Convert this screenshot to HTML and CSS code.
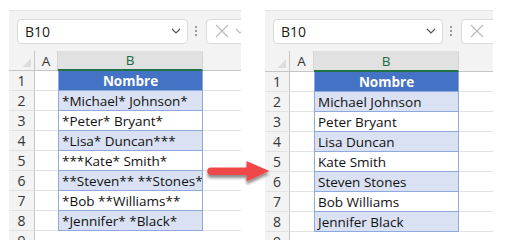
FILE: index.html
```html
<!doctype html>
<html>
<head>
<meta charset="utf-8">
<title>Quitar asteriscos</title>
<link rel="stylesheet" href="styles.css">
</head>
<body>
<div class="stage">
  <div class="panel left">
    <div class="toolbar">
      <div class="namebox"><span>B10</span><svg class="chev" width="10" height="6" viewBox="0 0 10 6"><path d="M1 1l4 4 4-4" fill="none" stroke="#555" stroke-width="1.2"/></svg></div>
      <div class="dots"><i></i><i></i><i></i></div>
      <div class="fxbox"><svg width="14" height="14" viewBox="0 0 14 14"><path d="M1 1l12 12M13 1L1 13" stroke="#bbb" stroke-width="1.2"/></svg><svg class="chev2" width="10" height="6" viewBox="0 0 10 6"><path d="M1 1l4 4 4-4" fill="none" stroke="#bbb" stroke-width="1.2"/></svg></div>
    </div>
    <div class="sheet">
      <div class="corner"></div><div class="colhdr">A</div><div class="colhdr sel">B</div><div class="colhdr last"></div>
      <div class="rowhdr">1</div><div class="cell"></div><div class="tcell head">Nombre</div><div class="cell"></div>
      <div class="rowhdr">2</div><div class="cell"></div><div class="tcell band">*Michael* Johnson*</div><div class="cell"></div>
      <div class="rowhdr">3</div><div class="cell"></div><div class="tcell">*Peter* Bryant*</div><div class="cell"></div>
      <div class="rowhdr">4</div><div class="cell"></div><div class="tcell band">*Lisa* Duncan***</div><div class="cell"></div>
      <div class="rowhdr">5</div><div class="cell"></div><div class="tcell">***Kate* Smith*</div><div class="cell"></div>
      <div class="rowhdr">6</div><div class="cell"></div><div class="tcell band">**Steven** **Stones*</div><div class="cell"></div>
      <div class="rowhdr">7</div><div class="cell"></div><div class="tcell">*Bob **Williams**</div><div class="cell"></div>
      <div class="rowhdr">8</div><div class="cell"></div><div class="tcell band">*Jennifer* *Black*</div><div class="cell"></div>
      <div class="rowhdr">9</div><div class="cell"></div><div class="cell"></div><div class="cell"></div>
    </div>
  </div>

  <div class="panel right">
    <div class="toolbar">
      <div class="namebox"><span>B10</span><svg class="chev" width="10" height="6" viewBox="0 0 10 6"><path d="M1 1l4 4 4-4" fill="none" stroke="#555" stroke-width="1.2"/></svg></div>
      <div class="dots"><i></i><i></i><i></i></div>
      <div class="fxbox"><svg width="14" height="14" viewBox="0 0 14 14"><path d="M1 1l12 12M13 1L1 13" stroke="#bbb" stroke-width="1.2"/></svg></div>
    </div>
    <div class="sheet">
      <div class="corner"></div><div class="colhdr">A</div><div class="colhdr sel">B</div><div class="colhdr last"></div>
      <div class="rowhdr">1</div><div class="cell"></div><div class="tcell head">Nombre</div><div class="cell"></div>
      <div class="rowhdr">2</div><div class="cell"></div><div class="tcell band">Michael Johnson</div><div class="cell"></div>
      <div class="rowhdr">3</div><div class="cell"></div><div class="tcell">Peter Bryant</div><div class="cell"></div>
      <div class="rowhdr">4</div><div class="cell"></div><div class="tcell band">Lisa Duncan</div><div class="cell"></div>
      <div class="rowhdr">5</div><div class="cell"></div><div class="tcell">Kate Smith</div><div class="cell"></div>
      <div class="rowhdr">6</div><div class="cell"></div><div class="tcell band">Steven Stones</div><div class="cell"></div>
      <div class="rowhdr">7</div><div class="cell"></div><div class="tcell">Bob Williams</div><div class="cell"></div>
      <div class="rowhdr">8</div><div class="cell"></div><div class="tcell band">Jennifer Black</div><div class="cell"></div>
      <div class="rowhdr">9</div><div class="cell"></div><div class="cell"></div><div class="cell"></div>
    </div>
  </div>

  <svg class="arrow" width="70" height="36" viewBox="0 0 70 36">
    <defs>
      <filter id="sh" x="-20%" y="-30%" width="140%" height="180%">
        <feGaussianBlur in="SourceAlpha" stdDeviation="1.6"/>
        <feOffset dx="0" dy="2.5"/>
        <feComponentTransfer><feFuncA type="linear" slope="0.45"/></feComponentTransfer>
        <feMerge><feMergeNode/><feMergeNode in="SourceGraphic"/></feMerge>
      </filter>
    </defs>
    <path filter="url(#sh)" fill="#f0474a" d="M8 13.5h35.5v-6.5l23 10-23 10.5v-6.5h-35.5a3.7 3.7 0 0 1 0-7.5z"/>
  </svg>
</div>
</body>
</html>
```

FILE: styles.css
```css
html, body {
    margin: 0;
    padding: 0;
    background: #fff;
    overflow: hidden;
}
.stage {
    position: relative;
    display: flex;
    gap: 24px;
    padding: 10px 0 0 9px;
    height: 230px;
    font-family: "Open Sans", sans-serif;
}
.panel {
    background: #f3f3f3;
    border-top: 1px solid #e4e4e4;
    overflow: hidden;
}
.panel.left { width: 232px; }
.panel.right { width: 228px; }

.toolbar {
    display: flex;
    align-items: center;
    height: 40px;
    padding-left: 8px;
    white-space: nowrap;
}
.namebox {
    flex: none;
    display: flex;
    align-items: center;
    justify-content: space-between;
    box-sizing: border-box;
    height: 25px;
    padding: 0 6px 0 7px;
    background: #fff;
    border: 1px solid #dadada;
    border-radius: 4px;
    font-size: 14px;
    color: #1a1a1a;
}
.left .namebox { width: 171px; }
.right .namebox { width: 170px; }
.dots {
    flex: none;
    display: flex;
    flex-direction: column;
    gap: 2px;
    margin: 0 9px 0 7px;
}
.dots i {
    display: block;
    width: 2px;
    height: 2px;
    background: #9a9a9a;
}
.fxbox {
    flex: none;
    display: flex;
    align-items: center;
    gap: 6px;
    box-sizing: border-box;
    width: 60px;
    height: 25px;
    padding-left: 8px;
    background: #fff;
    border: 1px solid #dadada;
    border-radius: 4px;
}

.sheet {
    display: grid;
    grid-auto-rows: 20px;
    font-family: "Open Sans", sans-serif;
}
.left .sheet { grid-template-columns: 26px 23px 145px 1fr; }
.right .sheet {
    grid-template-columns: 25px 24px 145px 1fr;
    grid-template-rows: 21px;
}

.corner {
    background: linear-gradient(135deg, transparent 60%, #dcdcdc 60%) no-repeat right 3px bottom 3px / 11px 11px #f3f3f3;
    border-right: 1px solid #c6c6c6;
    border-bottom: 1px solid #c6c6c6;
    box-sizing: border-box;
}
.colhdr {
    box-sizing: border-box;
    display: flex;
    align-items: center;
    justify-content: center;
    font-size: 13.5px;
    color: #333;
    background: #f3f3f3;
    border-right: 1px solid #d4d4d4;
    border-bottom: 1px solid #c6c6c6;
}
.colhdr.sel {
    background: #e1e1e1;
    color: #1b6b3c;
    border-bottom: 2px solid #217346;
}
.colhdr.last { border-right: none; }
.rowhdr {
    box-sizing: border-box;
    display: flex;
    align-items: center;
    justify-content: center;
    font-size: 14px;
    color: #333;
    background: #f3f3f3;
    border-right: 1px solid #c6c6c6;
    border-bottom: 1px solid #e2e2e2;
}
.cell {
    box-sizing: border-box;
    background: #fff;
    border-bottom: 1px solid #e2e2e2;
}
.tcell {
    box-sizing: border-box;
    display: flex;
    align-items: center;
    padding-left: 3px;
    background: #fff;
    border: 1px solid #8ea9db;
    border-top: none;
    font-size: 13.5px;
    color: #111;
    white-space: nowrap;
    overflow: hidden;
}
.tcell.band { background: #d9e1f2; }
.tcell.head {
    justify-content: center;
    padding-left: 0;
    background: #4472c4;
    color: #fff;
    font-weight: bold;
}

.arrow {
    position: absolute;
    left: 203px;
    top: 154px;
}
```
